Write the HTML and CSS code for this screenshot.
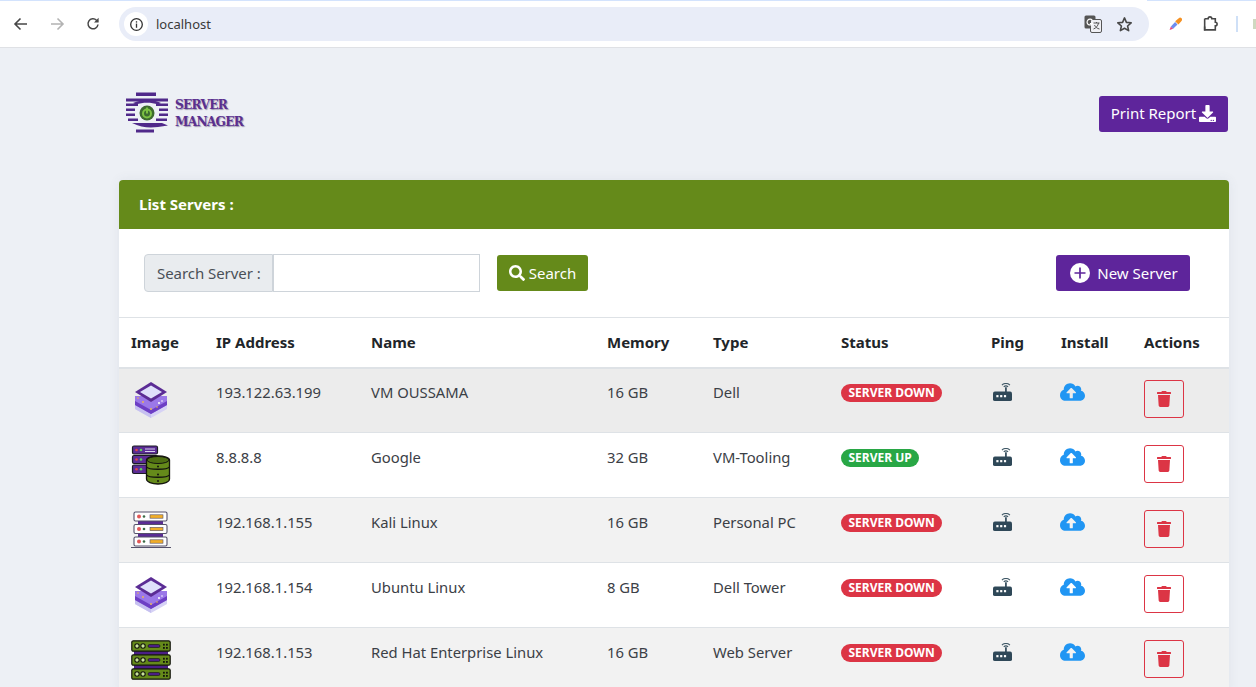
FILE: index.html
```html
<!DOCTYPE html>
<html lang="en">
<head>
<meta charset="utf-8">
<title>Server Manager</title>
<link rel="stylesheet" href="styles.css">
</head>
<body>
<svg class="defs" xmlns="http://www.w3.org/2000/svg">
  <symbol id="i-trash" viewBox="0 0 448 512"><path d="M432 32H312l-9.4-18.7A24 24 0 0 0 281.1 0H166.8a23.72 23.72 0 0 0-21.4 13.3L136 32H16A16 16 0 0 0 0 48v32a16 16 0 0 0 16 16h416a16 16 0 0 0 16-16V48a16 16 0 0 0-16-16zM53.2 467a48 48 0 0 0 47.9 45h245.8a48 48 0 0 0 47.9-45L416 128H32z"/></symbol>
  <symbol id="i-cloud" viewBox="0 0 640 512"><path d="M537.6 226.6c4.1-10.7 6.4-22.4 6.4-34.6 0-53-43-96-96-96-19.7 0-38.1 6-53.3 16.2C367 64.2 315.3 32 256 32c-88.4 0-160 71.6-160 160 0 2.7.1 5.4.2 8.1C40.2 219.8 0 273.2 0 336c0 79.5 64.5 144 144 144h368c70.7 0 128-57.3 128-128 0-61.9-44-113.6-102.4-125.4zM393.4 288H328v112c0 8.8-7.2 16-16 16h-48c-8.8 0-16-7.2-16-16V288h-65.4c-14.3 0-21.4-17.2-11.3-27.3l105.4-105.4c6.2-6.2 16.4-6.2 22.6 0l105.4 105.4c10.1 10.1 2.9 27.3-11.3 27.3z"/></symbol>
  <symbol id="i-router" viewBox="0 0 20 20">
    <rect x="0" y="9" width="20" height="10" rx="2" fill="#2f4858"/>
    <rect x="12.700" y="4.500" width="1.800" height="5" fill="#2f4858"/>
    <rect x="3.500" y="12.700" width="2.300" height="2.300" fill="#fff"/><rect x="7.500" y="12.700" width="2.300" height="2.300" fill="#fff"/><rect x="11.500" y="12.700" width="2.300" height="2.300" fill="#fff"/>
    <path d="M9.400 2.200a6 6 0 0 1 8.400 0M11.300 4a3.400 3.400 0 0 1 4.600 0" fill="none" stroke="#3f5866" stroke-width="1.200"/>
  </symbol>
  <symbol id="i-layers" viewBox="0 0 36 40">
    <path d="M2 24v4l16 9 16-9v-4z" fill="#d6d2f5"/>
    <path d="M2 24v4l16 9v-4z" fill="#c6c0f0"/>
    <path d="M2 15v9l16 9 16-9v-9z" fill="#9b78e8"/>
    <path d="M2 20v4l16 9 16-9v-4L18 29z" fill="#6d3fc4"/>
    <path d="M18 1 34 11 18 21 2 11z" fill="#5b2c95"/>
    <path d="M18 4.500 29 11 18 17.500 7 11z" fill="#dfe0fb"/>
    <circle cx="26" cy="22" r="1" fill="#fff"/><circle cx="29" cy="20" r=".8" fill="#fff"/><circle cx="10" cy="21" r=".9" fill="#f0b94a"/><circle cx="18" cy="28" r=".9" fill="#f0b94a"/><circle cx="5" cy="17" r=".8" fill="#f0b94a"/><circle cx="24" cy="26" r=".8" fill="#f0b94a"/>
  </symbol>
  <symbol id="i-rackdb" viewBox="0 0 40 40">
    <g stroke="#1c1c24" stroke-width="1.200">
      <rect x="1.500" y="1" width="25" height="8" rx="1.500" fill="#5b2c95"/>
      <rect x="1.500" y="10.500" width="25" height="8" rx="1.500" fill="#5b2c95"/>
      <rect x="1.500" y="20" width="25" height="8.500" rx="1.500" fill="#5b2c95"/>
    </g>
    <circle cx="5.500" cy="5" r="1.300" fill="#e04848"/><circle cx="10" cy="5" r="1.300" fill="#5fd05f"/><rect x="14" y="3.500" width="10" height="1" fill="#d8d0ee"/><rect x="14" y="6" width="10" height="1" fill="#d8d0ee"/>
    <circle cx="5.500" cy="14.500" r="1.300" fill="#e04848"/><circle cx="10" cy="14.500" r="1.300" fill="#5fd05f"/>
    <circle cx="5.500" cy="24.300" r="1.300" fill="#e04848"/><circle cx="10" cy="24.300" r="1.300" fill="#5fd05f"/>
    <path d="M15.500 15c0-2.500 5.500-4 11.500-4s11.500 1.500 11.500 4v19c0 3-5.500 5-11.500 5s-11.500-2-11.500-5z" fill="#658a1a" stroke="#14140f" stroke-width="1.300"/>
    <ellipse cx="27" cy="15" rx="11" ry="3.500" fill="#4f6f13" stroke="#14140f" stroke-width="1"/>
    <path d="M15.500 22c2 3 21 3 23 0M15.500 30c2 3 21 3 23 0" fill="none" stroke="#14140f" stroke-width="1.300"/>
    <circle cx="27" cy="21.500" r="1" fill="#14140f"/><circle cx="27" cy="29.500" r="1" fill="#14140f"/><circle cx="27" cy="36" r="1" fill="#14140f"/>
  </symbol>
  <symbol id="i-rackwhite" viewBox="0 0 40 38">
    <rect x="7" y="8" width="25" height="7" fill="#5b2c95"/><rect x="7" y="20" width="25" height="7" fill="#5b2c95"/>
    <g fill="#fff" stroke="#55506a" stroke-width="1.100">
      <rect x="3" y="1" width="33" height="9" rx="1.500"/><rect x="3" y="13.500" width="33" height="9" rx="1.500"/><rect x="3" y="26" width="33" height="9" rx="1.500"/>
    </g>
    <g fill="#e25757"><circle cx="8" cy="5.500" r="2"/><circle cx="8" cy="18" r="2"/><circle cx="8" cy="30.500" r="2"/></g>
    <g fill="#3c6b46"><circle cx="13" cy="5.500" r="1.300"/><circle cx="13" cy="18" r="1.300"/><circle cx="13" cy="30.500" r="1.300"/></g>
    <g fill="#f1ad2a" stroke="#55506a" stroke-width=".6"><rect x="19" y="3.800" width="13" height="3.400"/><rect x="19" y="16.300" width="13" height="3.400"/><rect x="19" y="28.800" width="13" height="3.400"/></g>
    <rect x="0" y="36" width="40" height="1" fill="#55506a"/>
  </symbol>
  <symbol id="i-rackgreen" viewBox="0 0 40 40">
    <rect x="3" y="10" width="34" height="20" fill="#4a1f85"/>
    <g fill="#658a1a" stroke="#12140c" stroke-width="1.200">
      <rect x=".8" y=".8" width="38.400" height="10.400" rx="1.500"/><rect x=".8" y="14.800" width="38.400" height="10.400" rx="1.500"/><rect x=".8" y="28.800" width="38.400" height="10.400" rx="1.500"/>
    </g>
    <g fill="#c9e39a" stroke="#12140c" stroke-width="1.100">
      <circle cx="6" cy="6" r="2.200"/><circle cx="12" cy="6" r="2.200"/><circle cx="6" cy="20" r="2.200"/><circle cx="12" cy="20" r="2.200"/><circle cx="6" cy="34" r="2.200"/><circle cx="12" cy="34" r="2.200"/>
    </g>
    <g fill="#4a1f85" stroke="#12140c" stroke-width=".6"><rect x="17" y="4.500" width="12" height="3" rx="1.500"/><rect x="17" y="18.500" width="12" height="3" rx="1.500"/><rect x="17" y="32.500" width="12" height="3" rx="1.500"/></g>
    <g fill="#12140c"><rect x="32" y="3.800" width="1.800" height="1.800"/><rect x="35" y="3.800" width="1.800" height="1.800"/><rect x="32" y="7" width="1.800" height="1.800"/><rect x="35" y="7" width="1.800" height="1.800"/><rect x="32" y="17.800" width="1.800" height="1.800"/><rect x="35" y="17.800" width="1.800" height="1.800"/><rect x="32" y="21" width="1.800" height="1.800"/><rect x="35" y="21" width="1.800" height="1.800"/><rect x="32" y="31.800" width="1.800" height="1.800"/><rect x="35" y="31.800" width="1.800" height="1.800"/><rect x="32" y="35" width="1.800" height="1.800"/><rect x="35" y="35" width="1.800" height="1.800"/></g>
  </symbol>
</svg>

<div class="browser">
  <div class="tabstrip"><span class="tab-gap"></span></div>
  <div class="toolbar">
    <svg class="nav-icon" viewBox="0 0 16 16"><path d="M14 8H2.500M7.500 2.500 2 8l5.500 5.500" fill="none" stroke="#474747" stroke-width="1.600"/></svg>
    <svg class="nav-icon" viewBox="0 0 16 16"><path d="M2 8h11.500M8.500 2.500 14 8l-5.500 5.500" fill="none" stroke="#b3b3b3" stroke-width="1.600"/></svg>
    <svg class="nav-icon" viewBox="0 0 16 16"><path d="M13 8.500A5 5 0 1 1 11.500 4.200L13 5.500" fill="none" stroke="#474747" stroke-width="1.500"/><path d="M13.600 1.800v4.600H9z" fill="#474747"/></svg>
    <div class="omnibox">
      <span class="site-info"><svg class="info-icon" viewBox="0 0 16 16"><circle cx="8" cy="8" r="6.200" fill="none" stroke="#333" stroke-width="1.400"/><rect x="7.300" y="7" width="1.400" height="4.500" fill="#333"/><rect x="7.300" y="4.500" width="1.400" height="1.500" fill="#333"/></svg></span>
      <span class="url">localhost</span>
      <svg class="translate-icon" viewBox="0 0 18 18"><rect x="0.500" y="0.500" width="11" height="13" rx="1.500" fill="#555"/><rect x="6.500" y="4.500" width="11" height="13" rx="1.500" fill="#f0f0f4" stroke="#555"/><path d="M8.200 5.200A2.900 2.900 0 1 0 8.500 8.500H5.900" fill="none" stroke="#fff" stroke-width="1.200"/><path d="M9.500 8h6M12.500 7v1M14.500 8c-.5 3-2.500 5-5 6M10.500 10c.8 2 2.500 3.500 5 4" fill="none" stroke="#555" stroke-width="1"/></svg>
      <svg class="star-icon" viewBox="0 0 16 16"><path d="M8 1.800 9.800 6l4.500.4-3.400 3 1 4.400L8 11.500 4.100 13.800l1-4.400-3.400-3L6.200 6z" fill="none" stroke="#474747" stroke-width="1.500" stroke-linejoin="round"/></svg>
    </div>
    <svg class="dropper-icon" viewBox="0 0 14 14"><path d="M.6 13.400 2 9.600 4.400 12z" fill="#e8457e"/><path d="M2 9.600 6.500 5l2.500 2.500L4.400 12z" fill="#6d8df0"/><path d="M6.500 4 10.300 .8a2 2 0 0 1 2.900 2.900L10 7.500z" fill="#f59122"/></svg>
    <svg class="puzzle-icon" viewBox="0 0 16 16"><path d="M2 3.500h3.300a1.700 1.700 0 0 1 3.400 0H12v3.300a1.700 1.700 0 0 1 0 3.400V14H2v-3.200" fill="none" stroke="#474747" stroke-width="1.500" transform="translate(.5 -.5)"/><path d="M2.500 3v11" stroke="#474747" stroke-width="1.500"/></svg>
    <span class="divider"></span>
    <span class="avatar-sliver"></span>
  </div>
</div>

<main class="page">
  <header class="top">
    <div class="logo">
      <svg class="logo-mark" viewBox="0 0 44 44">
        <g fill="#50298a">
          <rect x="11" y="0.500" width="20" height="3.500"/>
          <rect x="1" y="6.500" width="42" height="3"/>
          <rect x="1" y="11.500" width="12" height="2.500"/><rect x="31" y="11.500" width="12" height="2.500"/>
          <rect x="1" y="16.500" width="9" height="2.500"/><rect x="34" y="16.500" width="9" height="2.500"/>
          <rect x="1" y="21.500" width="9" height="2.500"/><rect x="34" y="21.500" width="9" height="2.500"/>
          <rect x="3" y="26.500" width="10" height="2.500"/><rect x="31" y="26.500" width="11" height="2.500"/>
          <path d="M7 31h30l6 2.500-10 1.500c-9 1-17 .5-26-4z"/>
          <rect x="11" y="37.500" width="18" height="3"/>
          <path d="M8 11c9-4 20-4 28 0l-3 1.500c-7-2.500-15-2.500-22 0z"/>
        </g>
        <circle cx="22" cy="21" r="7.500" fill="#3d6b2f"/>
        <circle cx="22" cy="21.500" r="4" fill="none" stroke="#7cc242" stroke-width="2"/>
        <rect x="21" y="15.500" width="2" height="6" fill="#7cc242"/>
      </svg>
      <div class="logo-text"><span>SERVER</span><span>MANAGER</span></div>
    </div>
    <button class="btn btn-purple print"><span>Print Report</span><svg class="fa-download" viewBox="0 0 512 512"><path d="M216 0h80c13.300 0 24 10.700 24 24v168h87.700c17.800 0 26.700 21.500 14.100 34.100L269.700 378.300c-7.500 7.500-19.800 7.500-27.300 0L90.100 226.100c-12.600-12.600-3.700-34.100 14.100-34.100H192V24c0-13.300 10.700-24 24-24zm296 376v112c0 13.300-10.700 24-24 24H24c-13.300 0-24-10.700-24-24V376c0-13.300 10.700-24 24-24h146.700l49 49c20.100 20.100 52.500 20.100 72.600 0l49-49H488c13.300 0 24 10.700 24 24zm-124 88c0-11-9-20-20-20s-20 9-20 20 9 20 20 20 20-9 20-20zm64 0c0-11-9-20-20-20s-20 9-20 20 9 20 20 20 20-9 20-20z"/></svg></button>
  </header>

  <section class="card">
    <div class="card-head">List Servers :</div>
    <div class="toolbar-row">
      <div class="search-group">
        <label class="search-label" for="q">Search Server :</label>
        <input class="search-input" id="q" type="text">
      </div>
      <button class="btn btn-green search-btn"><svg class="fa-search" viewBox="0 0 512 512"><path d="M505 442.700L405.300 343c-4.500-4.500-10.600-7-17-7H372c27.600-35.300 44-79.700 44-128C416 93.100 322.900 0 208 0S0 93.100 0 208s93.100 208 208 208c48.300 0 92.700-16.400 128-44v16.300c0 6.400 2.500 12.500 7 17l99.700 99.700c9.400 9.400 24.600 9.400 33.900 0l28.300-28.300c9.400-9.400 9.400-24.600.1-34zM208 336c-70.700 0-128-57.200-128-128 0-70.700 57.200-128 128-128 70.700 0 128 57.200 128 128 0 70.700-57.200 128-128 128z"/></svg><span>Search</span></button>
      <button class="btn btn-purple new-btn"><svg class="plus-circle" viewBox="0 0 20 20"><circle cx="10" cy="10" r="10" fill="#fff"/><path d="M10 4.500v11M4.500 10h11" stroke="#5e259b" stroke-width="1.700"/></svg><span>New Server</span></button>
    </div>
    <table class="servers">
      <colgroup>
        <col class="c-img"><col class="c-ip"><col class="c-name"><col class="c-mem"><col class="c-type"><col class="c-status"><col class="c-ping"><col class="c-inst"><col class="c-act">
      </colgroup>
      <thead>
        <tr><th>Image</th><th>IP Address</th><th>Name</th><th>Memory</th><th>Type</th><th>Status</th><th>Ping</th><th>Install</th><th>Actions</th></tr>
      </thead>
      <tbody>
        <tr>
          <td><svg class="srv srv-layers"><use href="#i-layers"/></svg></td>
          <td>193.122.63.199</td><td>VM OUSSAMA</td><td>16 GB</td><td>Dell</td>
          <td><span class="badge down">SERVER DOWN</span></td>
          <td><svg class="router"><use href="#i-router"/></svg></td>
          <td><svg class="cloud"><use href="#i-cloud"/></svg></td>
          <td><button class="del"><svg class="trash"><use href="#i-trash"/></svg></button></td>
        </tr>
        <tr>
          <td><svg class="srv"><use href="#i-rackdb"/></svg></td>
          <td>8.8.8.8</td><td>Google</td><td>32 GB</td><td>VM-Tooling</td>
          <td><span class="badge up">SERVER UP</span></td>
          <td><svg class="router"><use href="#i-router"/></svg></td>
          <td><svg class="cloud"><use href="#i-cloud"/></svg></td>
          <td><button class="del"><svg class="trash"><use href="#i-trash"/></svg></button></td>
        </tr>
        <tr>
          <td><svg class="srv"><use href="#i-rackwhite"/></svg></td>
          <td>192.168.1.155</td><td>Kali Linux</td><td>16 GB</td><td>Personal PC</td>
          <td><span class="badge down">SERVER DOWN</span></td>
          <td><svg class="router"><use href="#i-router"/></svg></td>
          <td><svg class="cloud"><use href="#i-cloud"/></svg></td>
          <td><button class="del"><svg class="trash"><use href="#i-trash"/></svg></button></td>
        </tr>
        <tr>
          <td><svg class="srv srv-layers"><use href="#i-layers"/></svg></td>
          <td>192.168.1.154</td><td>Ubuntu Linux</td><td>8 GB</td><td>Dell Tower</td>
          <td><span class="badge down">SERVER DOWN</span></td>
          <td><svg class="router"><use href="#i-router"/></svg></td>
          <td><svg class="cloud"><use href="#i-cloud"/></svg></td>
          <td><button class="del"><svg class="trash"><use href="#i-trash"/></svg></button></td>
        </tr>
        <tr>
          <td><svg class="srv"><use href="#i-rackgreen"/></svg></td>
          <td>192.168.1.153</td><td>Red Hat Enterprise Linux</td><td>16 GB</td><td>Web Server</td>
          <td><span class="badge down">SERVER DOWN</span></td>
          <td><svg class="router"><use href="#i-router"/></svg></td>
          <td><svg class="cloud"><use href="#i-cloud"/></svg></td>
          <td><button class="del"><svg class="trash"><use href="#i-trash"/></svg></button></td>
        </tr>
      </tbody>
    </table>
  </section>
</main>
</body>
</html>
```

FILE: styles.css
```css
* { box-sizing: border-box; }
html, body { margin: 0; height: 100%; overflow: hidden; }
body {
  background: #edf0f5;
  font-family: "Noto Sans", "Open Sans", sans-serif;
  font-size: 15px;
  color: #212529;
}
.defs { display: none; }

/* browser chrome */
.browser { background: #fff; height: 48px; border-bottom: 1px solid #dfe1e5; }
.tabstrip { display: flex; height: 1px; background: #d3e3fd; }
.tab-gap { width: 47px; height: 1px; margin-left: 1100px; background: #fff; }
.toolbar { display: flex; align-items: center; height: 38px; padding-left: 13px; margin-top: 4px; }
.nav-icon { width: 16px; height: 16px; margin-right: 20px; flex: none; }
.nav-icon:nth-child(3) { margin-right: 18px; }
.omnibox {
  display: flex; align-items: center; flex: none;
  width: 1030px; height: 34px; border-radius: 17px;
  background: #e9edf8; padding-left: 5px;
}
.site-info {
  width: 24px; height: 24px; border-radius: 50%; background: #fff;
  display: flex; align-items: center; justify-content: center;
}
.info-icon { width: 15px; height: 15px; }
.url { margin-left: 8px; font-size: 13px; color: #3a3a3a; flex: 1; }
.translate-icon { width: 18px; height: 18px; margin-right: 14px; }
.star-icon { width: 17px; height: 17px; margin-right: 16px; }
.dropper-icon { width: 14px; height: 14px; margin-left: 20px; }
.puzzle-icon { width: 18px; height: 18px; margin-left: 20px; }
.divider { width: 2px; height: 16px; background: #cfe0f7; margin-left: 17px; }
.avatar-sliver { width: 3px; height: 10px; background: #cfd8c0; margin-left: 15px; }

/* page */
.page { width: 1110px; margin-left: 119px; }
.top { display: flex; align-items: center; justify-content: space-between; height: 132px; padding: 0 1px 0 6px; }
.logo { display: flex; align-items: center; gap: 6px; }
.logo-mark { width: 44px; height: 44px; flex: none; filter: blur(.4px); }
.logo-text {
  display: flex; flex-direction: column;
  font-family: "DejaVu Serif", serif; font-weight: 700; font-size: 12.2px; line-height: 17px;
  color: #5a2f8f; text-shadow: 1px 1px 1px rgba(60, 40, 90, .45);
  letter-spacing: -.75px;
}
.btn {
  display: inline-flex; align-items: center; justify-content: center;
  font-family: inherit; font-size: 15px; color: #fff; border: 0; border-radius: 3px; height: 36px; padding: 0;
}
.btn-purple { background: #5e259b; }
.btn-green { background: #658a1a; }
.print { width: 129px; gap: 3px; padding-bottom: 2px; }
.print .fa-download { margin-top: 1px; }
.fa-download { width: 17px; height: 17px; fill: #fff; }

.card { background: #fff; border-radius: 4px 4px 0 0; box-shadow: 0 0 12px rgba(80, 90, 120, .08); }
.card-head {
  height: 49px; background: #658a1a; color: #fff; font-weight: 700; font-size: 15px;
  display: flex; align-items: center; padding: 0 0 2px 20px; border-radius: 4px 4px 0 0;
}
.toolbar-row { display: flex; align-items: center; height: 88px; padding: 0 39px 0 25px; }
.search-group { display: flex; height: 38px; }
.search-label {
  display: flex; align-items: center; width: 129px; padding-left: 12px;
  background: #e9ecef; border: 1px solid #ced4da; border-radius: 4px 0 0 4px;
  color: #495057; font-size: 15px; letter-spacing: -.05px;
}
.search-input { width: 207px; border: 1px solid #ced4da; background: #fff; outline: 0; padding: 0; margin: 0; }
.search-btn { width: 91px; margin-left: 17px; gap: 4px; }
.fa-search { width: 16px; height: 16px; fill: #fff; }
.new-btn { width: 134px; margin-left: auto; gap: 7px; padding-left: 2px; }
.plus-circle { width: 20px; height: 20px; }

.servers { width: 100%; border-collapse: collapse; table-layout: fixed; }
.c-img { width: 85px; } .c-ip { width: 155px; } .c-name { width: 236px; } .c-mem { width: 106px; }
.c-type { width: 128px; } .c-status { width: 150px; } .c-ping { width: 70px; } .c-inst { width: 83px; } .c-act { width: 97px; }
.servers th {
  height: 50px; padding: 0 12px; text-align: left; font-weight: 700; font-size: 15px; line-height: 20px;
  border-top: 1px solid #dee2e6; border-bottom: 2px solid #dee2e6;
}
.servers td {
  height: 65px; padding: 12px 12px 0; vertical-align: top; line-height: 24px; font-size: 14.8px; color: #3b4046;
  border-top: 1px solid #dee2e6;
}
.servers tbody tr:first-child td { border-top: 0; padding-top: 11px; }
.servers tbody tr:nth-child(odd) { background: #f2f2f2; }
.servers tbody tr:first-child { background: #ececec; }

.srv { display: block; width: 40px; height: 40px; }
.srv-layers { width: 36px; margin: 1px 0 0 2px; }
.badge {
  display: inline-block; height: 18px; line-height: 18px; padding: 0 7.5px; border-radius: 9px;
  font-size: 12px; font-weight: 700; color: #fff; vertical-align: top; margin-top: 4px;
}
.down { background: #dc3545; }
.up { background: #28a745; }
.router { display: block; width: 19px; height: 19px; margin: 3px 0 0 2px; }
.cloud { display: block; width: 25px; height: 20px; margin: 2px 0 0 -1px; fill: #2196f3; }
.del {
  display: flex; align-items: center; justify-content: center;
  width: 40px; height: 38px; background: transparent; border: 1px solid #dc3545; border-radius: 3px; padding: 0;
}
.trash { width: 14px; height: 16px; fill: #dc3545; }
```
